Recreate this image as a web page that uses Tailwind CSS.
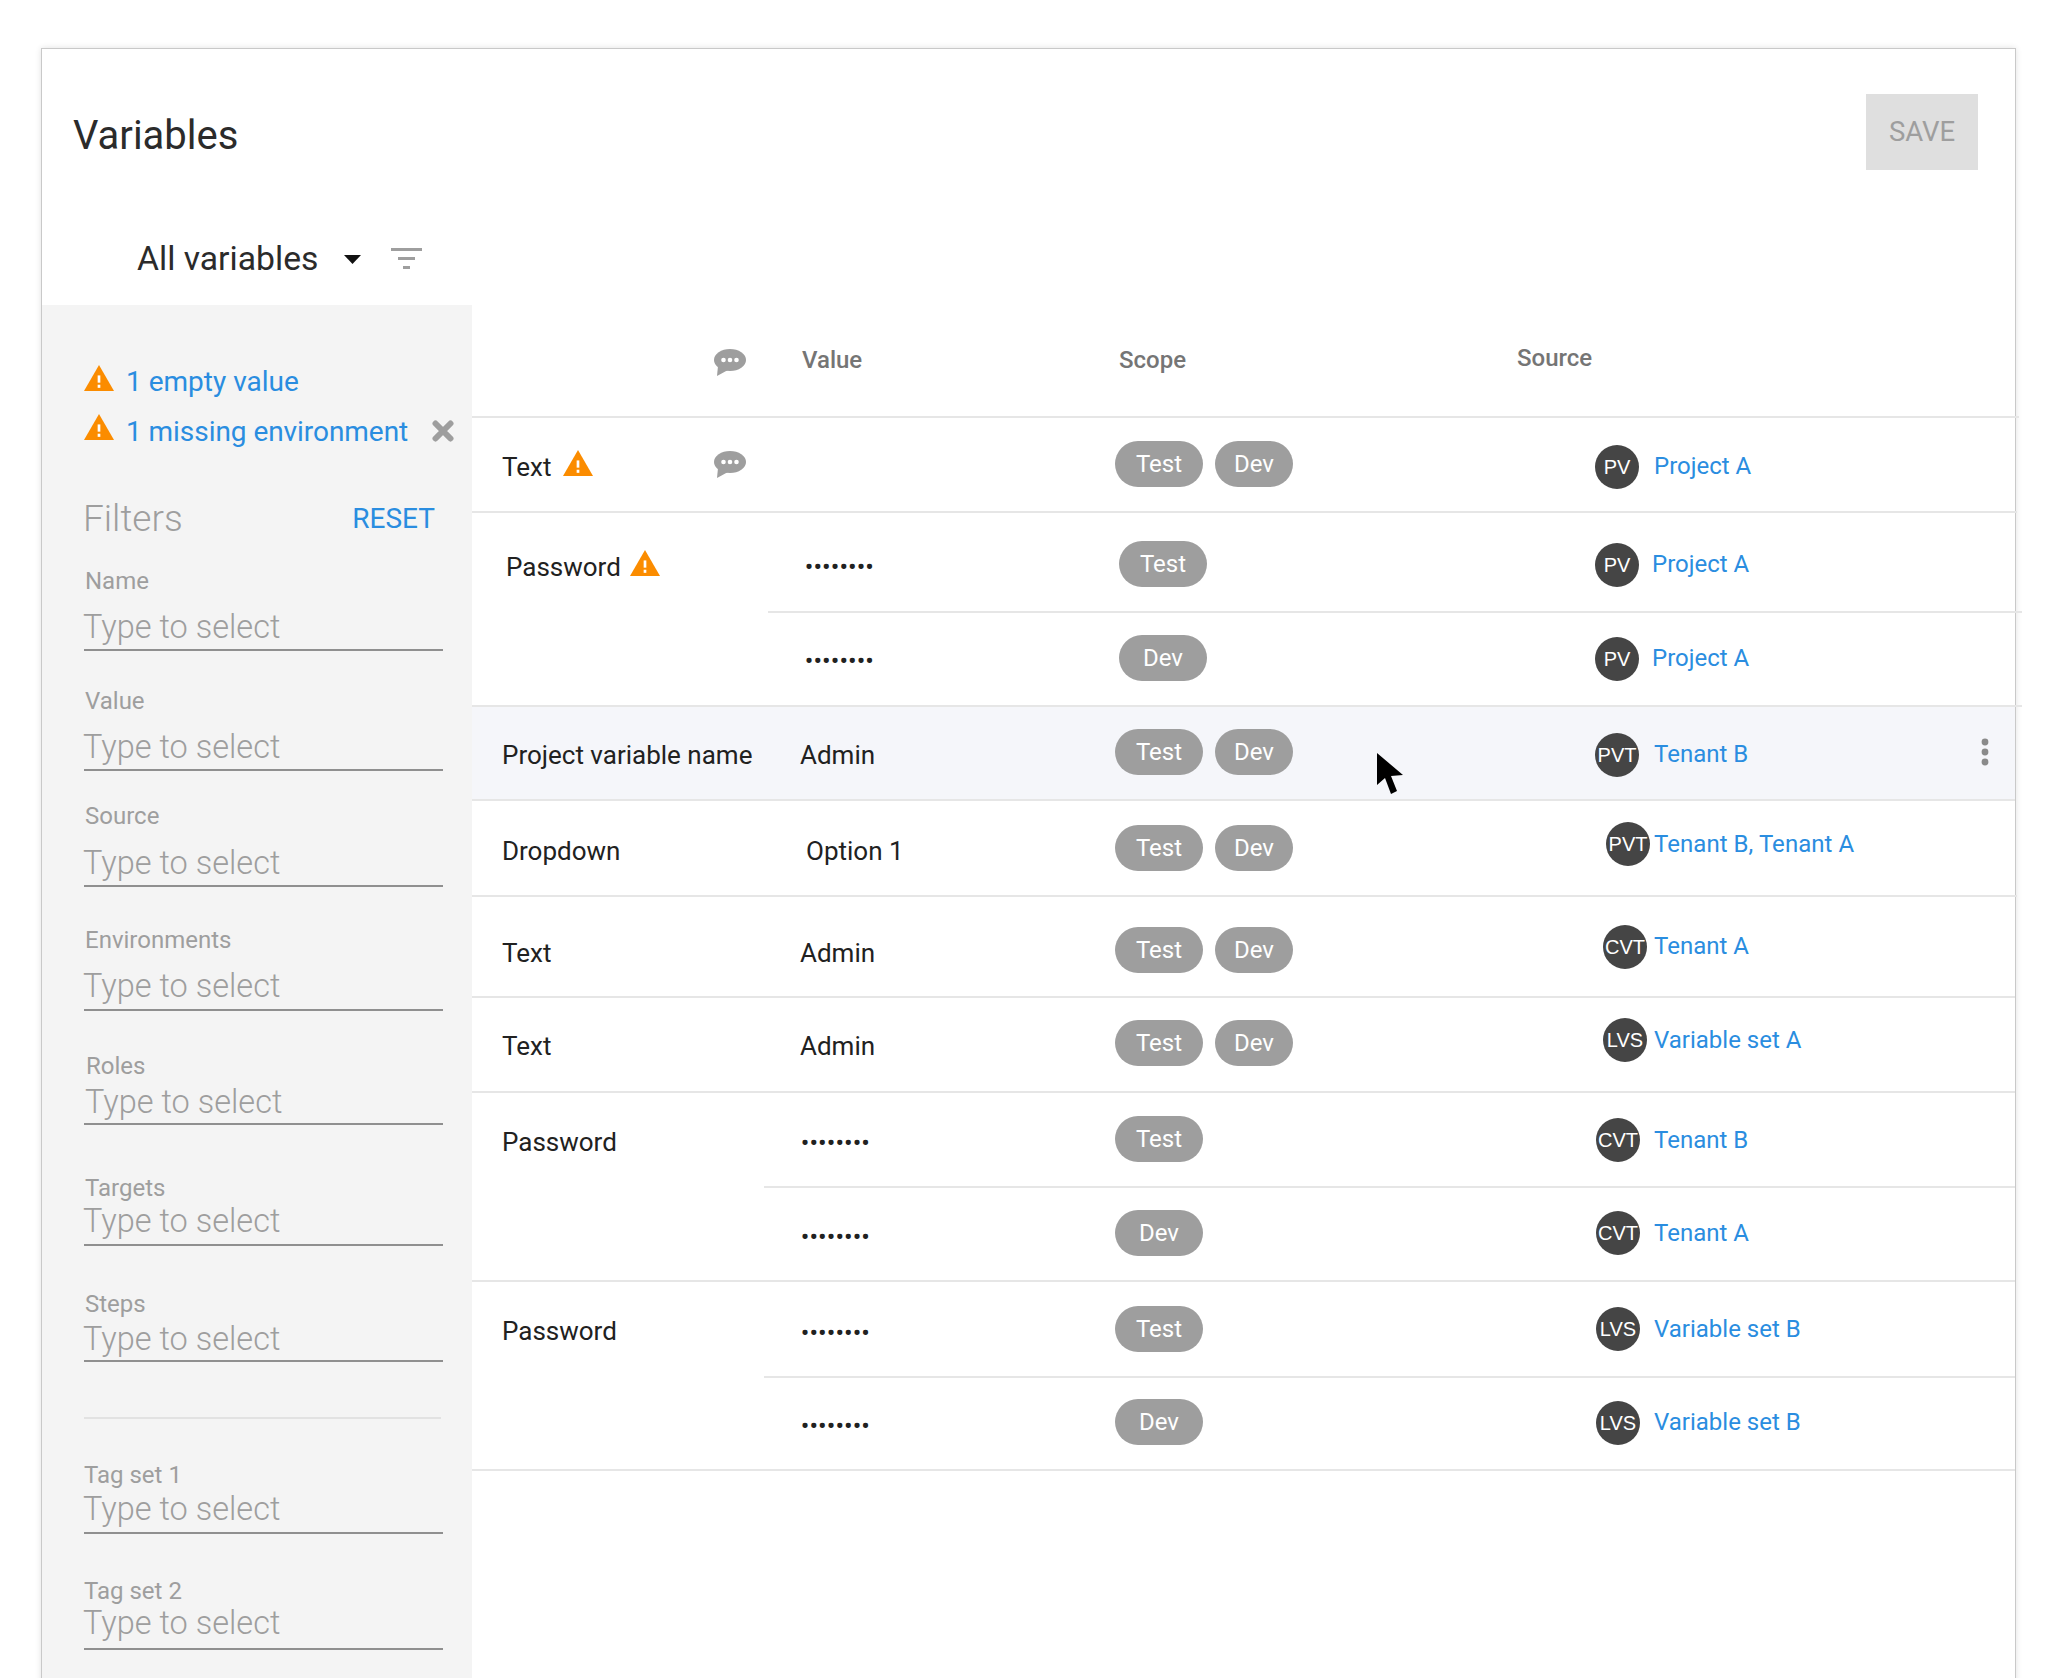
<!DOCTYPE html>
<html><head><meta charset="utf-8"><script src="https://cdn.jsdelivr.net/npm/@tailwindcss/browser@4"></script></head>
<body class="bg-white font-['Roboto',sans-serif] text-[#212121] overflow-hidden">
<div class="relative w-[2062px] h-[1678px] overflow-hidden pt-[48px] pl-[41px]">
<div class="w-[1975px] h-[1700px] bg-white border border-[#c9c9c9] shadow-[0_0_6px_rgba(0,0,0,0.12)] flex flex-col">
  <div class="h-[256px] shrink-0 relative flex flex-col">
    <div class="flex justify-between items-start pl-[32px] pr-[37px] pt-[45px]">
      <div class="text-[40px] leading-[48px] mt-[18px] text-[#2b2b2b] ml-[-1px]">Variables</div>
      <div class="w-[112px] h-[76px] bg-[#dfdfdf] text-[#9e9e9e] text-[27.5px] flex items-center justify-center">SAVE</div>
    </div>
    <div class="flex items-center pl-[96px] mt-[69px]">
      <span class="text-[33.7px] leading-[40px] text-[#2b2b2b] ml-[-1px]">All variables</span>
      <svg class="ml-[26px]" width="17" height="9" viewBox="0 0 17 9"><path d="M0 0H17L8.5 9Z" fill="#111"/></svg>
      <svg class="ml-[30px] mt-[-2px]" width="31" height="21" viewBox="0 0 31 21" fill="#9e9e9e"><rect width="31" height="3"/><rect x="7" y="9" width="17" height="3"/><rect x="12" y="18" width="7" height="3"/></svg>
    </div>
  </div>
  <div class="flex flex-1 min-h-0">
    <aside class="w-[430px] shrink-0 bg-[#f4f4f4] pl-[42px] pt-[61px] text-[#9e9e9e]">
      <div class="flex items-center h-[30px] text-[#2a8de0] text-[28px]">
        <svg class="mt-[-6px]" width="30" height="26" viewBox="0 0 29 25"><path d="M14.5 0L29 25H0Z" fill="#fb8c00"/><rect x="13.2" y="10" width="2.6" height="7" fill="#fff"/><rect x="13.2" y="19" width="2.6" height="3" fill="#fff"/></svg>
        <span class="ml-[12px] mt-[1px]">1 empty value</span>
      </div>
      <div class="flex items-center h-[30px] mt-[20px] text-[#2a8de0] text-[28px]">
        <svg class="mt-[-8px]" width="30" height="26" viewBox="0 0 29 25"><path d="M14.5 0L29 25H0Z" fill="#fb8c00"/><rect x="13.2" y="10" width="2.6" height="7" fill="#fff"/><rect x="13.2" y="19" width="2.6" height="3" fill="#fff"/></svg>
        <span class="ml-[12px] mt-[1px] w-[306px] whitespace-nowrap tracking-[-0.05px]">1 missing environment</span>
        <svg width="22" height="22" viewBox="0 0 22 22"><path d="M3.5 3.5L18.5 18.5M18.5 3.5L3.5 18.5" stroke="#9e9e9e" stroke-width="6" stroke-linecap="round"/></svg>
      </div>
      <div class="flex justify-between items-center h-[40px] mt-[53px] w-[349px]">
        <span class="text-[37px] font-light text-[#9e9e9e] ml-[-1px]">Filters</span>
        <span class="text-[28px] text-[#2a8de0] mr-[-2px]">RESET</span>
      </div>
      <div class="w-[359px]">
        <div class="mt-[27px] h-[30px] leading-[30px] text-[24px] pl-[1px]">Name</div>
        <div class="mt-[7px] h-[48px] leading-[48px] text-[32.5px] font-light border-b-2 border-[#8f8f8f] pl-0"><span class="ml-[-1px]">Type to select</span></div>
        <div class="mt-[35px] h-[30px] leading-[30px] text-[24px] pl-[1px]">Value</div>
        <div class="mt-[7px] h-[48px] leading-[48px] text-[32.5px] font-light border-b-2 border-[#8f8f8f]"><span class="ml-[-1px]">Type to select</span></div>
        <div class="mt-[30px] h-[30px] leading-[30px] text-[24px] pl-[1px]">Source</div>
        <div class="mt-[8px] h-[48px] leading-[48px] text-[32.5px] font-light border-b-2 border-[#8f8f8f]"><span class="ml-[-1px]">Type to select</span></div>
        <div class="mt-[38px] h-[30px] leading-[30px] text-[24px] pl-[1px]">Environments</div>
        <div class="mt-[8px] h-[48px] leading-[46px] text-[32.5px] font-light border-b-2 border-[#8f8f8f]"><span class="ml-[-1px]">Type to select</span></div>
        <div class="mt-[40px] h-[30px] leading-[30px] text-[24px] pl-[2px]">Roles</div>
        <div class="mt-[-4px] h-[48px] leading-[50px] text-[32.5px] font-light border-b-2 border-[#8f8f8f] pl-[2px]"><span class="ml-[-1px]">Type to select</span></div>
        <div class="mt-[48px] h-[30px] leading-[30px] text-[24px] pl-[1px]">Targets</div>
        <div class="mt-[-5px] h-[48px] leading-[46px] text-[32.5px] font-light border-b-2 border-[#8f8f8f]"><span class="ml-[-1px]">Type to select</span></div>
        <div class="mt-[43px] h-[30px] leading-[30px] text-[24px] pl-[1px]">Steps</div>
        <div class="mt-[-5px] h-[48px] leading-[50px] text-[32.5px] font-light border-b-2 border-[#8f8f8f]"><span class="ml-[-1px]">Type to select</span></div>
        <div class="mt-[55px] h-[2px] bg-[#e2e2e2] w-[357px]"></div>
        <div class="mt-[41px] h-[30px] leading-[30px] text-[24px]">Tag set 1</div>
        <div class="mt-[-4px] h-[48px] leading-[46px] text-[32.5px] font-light border-b-2 border-[#8f8f8f]"><span class="ml-[-1px]">Type to select</span></div>
        <div class="mt-[42px] h-[30px] leading-[30px] text-[24px]">Tag set 2</div>
        <div class="mt-[-4px] h-[48px] leading-[43px] text-[32.5px] font-light border-b-2 border-[#8f8f8f]"><span class="ml-[-1px]">Type to select</span></div>
      </div>
    </aside>
    <main class="flex-1 min-w-0 text-[26px] leading-[30px]">
      <div class="h-[113px] flex border-b-2 border-[#e6e6e6] mr-[-4px] text-[24px] font-medium text-[#757575]">
        <div class="w-[328px] pt-[44px] pl-[241px] shrink-0"><svg width="33" height="27" viewBox="0 0 33 27"><ellipse cx="17" cy="11" rx="16" ry="11" fill="#9e9e9e"/><path d="M5 17L4 27L15 21Z" fill="#9e9e9e"/><circle cx="10.5" cy="11" r="2.3" fill="#fff"/><circle cx="17" cy="11" r="2.3" fill="#fff"/><circle cx="23.5" cy="11" r="2.3" fill="#fff"/></svg></div>
        <div class="w-[319px] pt-[40px] pl-[2px] shrink-0">Value</div>
        <div class="w-[398px] pt-[40px] shrink-0">Scope</div>
        <div class="pt-[38px]">Source</div>
      </div>

      <div class="h-[95px] flex border-b-2 border-[#e6e6e6] mr-[-2px]">
        <div class="w-[328px] pl-[30px] pt-[34px] shrink-0 relative flex items-start"><span>Text</span><svg class="ml-[12px] mt-[-2px]" width="30" height="26" viewBox="0 0 29 25"><path d="M14.5 0L29 25H0Z" fill="#fb8c00"/><rect x="13.2" y="10" width="2.6" height="7" fill="#fff"/><rect x="13.2" y="19" width="2.6" height="3" fill="#fff"/></svg><svg class="absolute left-[241px] top-[33px]" width="33" height="27" viewBox="0 0 33 27"><ellipse cx="17" cy="11" rx="16" ry="11" fill="#9e9e9e"/><path d="M5 17L4 27L15 21Z" fill="#9e9e9e"/><circle cx="10.5" cy="11" r="2.3" fill="#fff"/><circle cx="17" cy="11" r="2.3" fill="#fff"/><circle cx="23.5" cy="11" r="2.3" fill="#fff"/></svg></div>
        <div class="w-[315px] shrink-0"></div>
        <div class="w-[480px] pt-[23px] flex gap-[12px] shrink-0 text-[24px] text-white"><span class="w-[88px] h-[46px] rounded-full bg-[#9e9e9e] flex items-center justify-center">Test</span><span class="w-[78px] h-[46px] rounded-full bg-[#9e9e9e] flex items-center justify-center">Dev</span></div>
        <div class="flex"><div class="w-[59px] pt-[27px]"><span class="w-[44px] h-[44px] rounded-full bg-[#454545] text-white text-[20px] font-['Liberation_Sans',sans-serif] flex items-center justify-center whitespace-nowrap">PV</span></div><div class="pt-[33px] text-[#2a8de0] text-[24px]">Project A</div></div>
      </div>

      <div class="flex border-b-2 border-[#e6e6e6] mr-[-7px]">
        <div class="w-[296px] pl-[34px] pt-[39px] shrink-0 flex items-start"><span>Password</span><svg class="ml-[9px] mt-[-2px]" width="30" height="26" viewBox="0 0 29 25"><path d="M14.5 0L29 25H0Z" fill="#fb8c00"/><rect x="13.2" y="10" width="2.6" height="7" fill="#fff"/><rect x="13.2" y="19" width="2.6" height="3" fill="#fff"/></svg></div>
        <div class="flex-1">
          <div class="h-[100px] flex border-b-2 border-[#e6e6e6]">
            <div class="w-[351px] pl-[37px] pt-[39px] shrink-0 text-[22px] tracking-[0.75px] font-bold">••••••••</div>
            <div class="w-[476px] pt-[28px] shrink-0 text-[24px] text-white"><span class="w-[88px] h-[46px] rounded-full bg-[#9e9e9e] flex items-center justify-center">Test</span></div>
            <div class="flex"><div class="w-[57px] pt-[30px]"><span class="w-[44px] h-[44px] rounded-full bg-[#454545] text-white text-[20px] font-['Liberation_Sans',sans-serif] flex items-center justify-center whitespace-nowrap">PV</span></div><div class="pt-[36px] text-[#2a8de0] text-[24px]">Project A</div></div>
          </div>
          <div class="h-[92px] flex">
            <div class="w-[351px] pl-[37px] pt-[33px] shrink-0 text-[22px] tracking-[0.75px] font-bold">••••••••</div>
            <div class="w-[476px] pt-[22px] shrink-0 text-[24px] text-white"><span class="w-[88px] h-[46px] rounded-full bg-[#9e9e9e] flex items-center justify-center">Dev</span></div>
            <div class="flex"><div class="w-[57px] pt-[24px]"><span class="w-[44px] h-[44px] rounded-full bg-[#454545] text-white text-[20px] font-['Liberation_Sans',sans-serif] flex items-center justify-center whitespace-nowrap">PV</span></div><div class="pt-[30px] text-[#2a8de0] text-[24px]">Project A</div></div>
          </div>
        </div>
      </div>

      <div class="h-[94px] flex border-b-2 border-[#e6e6e6] bg-[#f5f6fa] relative">
        <div class="w-[328px] pl-[30px] pt-[33px] shrink-0 whitespace-nowrap">Project variable name</div>
        <div class="w-[315px] pt-[33px] shrink-0">Admin</div>
        <div class="w-[480px] pt-[22px] flex gap-[12px] shrink-0 text-[24px] text-white"><span class="w-[88px] h-[46px] rounded-full bg-[#9e9e9e] flex items-center justify-center">Test</span><span class="w-[78px] h-[46px] rounded-full bg-[#9e9e9e] flex items-center justify-center">Dev</span></div>
        <div class="flex"><div class="w-[59px] pt-[26px]"><span class="w-[44px] h-[44px] rounded-full bg-[#454545] text-white text-[20px] font-['Liberation_Sans',sans-serif] flex items-center justify-center whitespace-nowrap">PVT</span></div><div class="pt-[32px] text-[#2a8de0] text-[24px]">Tenant B</div></div>
        <svg class="absolute left-[1509px] top-[31px]" width="8" height="28" viewBox="0 0 8 28" fill="#8a8a8a"><circle cx="4" cy="4" r="3.4"/><circle cx="4" cy="14" r="3.4"/><circle cx="4" cy="24" r="3.4"/></svg>
      </div>

      <div class="h-[96px] flex border-b-2 border-[#e6e6e6] mr-[-2px]">
        <div class="w-[328px] pl-[30px] pt-[35px] shrink-0">Dropdown</div>
        <div class="w-[315px] pl-[6px] pt-[35px] shrink-0">Option 1</div>
        <div class="w-[480px] pt-[24px] flex gap-[12px] shrink-0 text-[24px] text-white"><span class="w-[88px] h-[46px] rounded-full bg-[#9e9e9e] flex items-center justify-center">Test</span><span class="w-[78px] h-[46px] rounded-full bg-[#9e9e9e] flex items-center justify-center">Dev</span></div>
        <div class="flex"><div class="w-[59px] pt-[21px] pl-[11px]"><span class="w-[44px] h-[44px] rounded-full bg-[#454545] text-white text-[20px] font-['Liberation_Sans',sans-serif] flex items-center justify-center whitespace-nowrap">PVT</span></div><div class="pt-[28px] text-[#2a8de0] text-[24px] whitespace-nowrap tracking-[0.05px]">Tenant B, Tenant A</div></div>
      </div>

      <div class="h-[101px] flex border-b-2 border-[#e6e6e6]">
        <div class="w-[328px] pl-[30px] pt-[41px] shrink-0">Text</div>
        <div class="w-[315px] pt-[41px] shrink-0">Admin</div>
        <div class="w-[480px] pt-[30px] flex gap-[12px] shrink-0 text-[24px] text-white"><span class="w-[88px] h-[46px] rounded-full bg-[#9e9e9e] flex items-center justify-center">Test</span><span class="w-[78px] h-[46px] rounded-full bg-[#9e9e9e] flex items-center justify-center">Dev</span></div>
        <div class="flex"><div class="w-[59px] pt-[28px] pl-[8px]"><span class="w-[44px] h-[44px] rounded-full bg-[#454545] text-white text-[20px] font-['Liberation_Sans',sans-serif] flex items-center justify-center whitespace-nowrap">CVT</span></div><div class="pt-[34px] text-[#2a8de0] text-[24px]">Tenant A</div></div>
      </div>

      <div class="h-[95px] flex border-b-2 border-[#e6e6e6]">
        <div class="w-[328px] pl-[30px] pt-[33px] shrink-0">Text</div>
        <div class="w-[315px] pt-[33px] shrink-0">Admin</div>
        <div class="w-[480px] pt-[22px] flex gap-[12px] shrink-0 text-[24px] text-white"><span class="w-[88px] h-[46px] rounded-full bg-[#9e9e9e] flex items-center justify-center">Test</span><span class="w-[78px] h-[46px] rounded-full bg-[#9e9e9e] flex items-center justify-center">Dev</span></div>
        <div class="flex"><div class="w-[59px] pt-[20px] pl-[8px]"><span class="w-[44px] h-[44px] rounded-full bg-[#454545] text-white text-[20px] font-['Liberation_Sans',sans-serif] flex items-center justify-center whitespace-nowrap">LVS</span></div><div class="pt-[27px] text-[#2a8de0] text-[24px] whitespace-nowrap">Variable set A</div></div>
      </div>

      <div class="flex border-b-2 border-[#e6e6e6]">
        <div class="w-[292px] pl-[30px] pt-[34px] shrink-0">Password</div>
        <div class="flex-1">
          <div class="h-[95px] flex border-b-2 border-[#e6e6e6]">
            <div class="w-[351px] pl-[37px] pt-[35px] shrink-0 text-[22px] tracking-[0.75px] font-bold">••••••••</div>
            <div class="w-[480px] pt-[23px] shrink-0 text-[24px] text-white"><span class="w-[88px] h-[46px] rounded-full bg-[#9e9e9e] flex items-center justify-center">Test</span></div>
            <div class="flex"><div class="w-[59px] pt-[25px] pl-[1px]"><span class="w-[44px] h-[44px] rounded-full bg-[#454545] text-white text-[20px] font-['Liberation_Sans',sans-serif] flex items-center justify-center whitespace-nowrap">CVT</span></div><div class="pt-[32px] text-[#2a8de0] text-[24px]">Tenant B</div></div>
          </div>
          <div class="h-[92px] flex">
            <div class="w-[351px] pl-[37px] pt-[34px] shrink-0 text-[22px] tracking-[0.75px] font-bold">••••••••</div>
            <div class="w-[480px] pt-[22px] shrink-0 text-[24px] text-white"><span class="w-[88px] h-[46px] rounded-full bg-[#9e9e9e] flex items-center justify-center">Dev</span></div>
            <div class="flex"><div class="w-[59px] pt-[23px] pl-[1px]"><span class="w-[44px] h-[44px] rounded-full bg-[#454545] text-white text-[20px] font-['Liberation_Sans',sans-serif] flex items-center justify-center whitespace-nowrap">CVT</span></div><div class="pt-[30px] text-[#2a8de0] text-[24px]">Tenant A</div></div>
          </div>
        </div>
      </div>

      <div class="flex border-b-2 border-[#e6e6e6]">
        <div class="w-[292px] pl-[30px] pt-[34px] shrink-0">Password</div>
        <div class="flex-1">
          <div class="h-[96px] flex border-b-2 border-[#e6e6e6]">
            <div class="w-[351px] pl-[37px] pt-[36px] shrink-0 text-[22px] tracking-[0.75px] font-bold">••••••••</div>
            <div class="w-[480px] pt-[24px] shrink-0 text-[24px] text-white"><span class="w-[88px] h-[46px] rounded-full bg-[#9e9e9e] flex items-center justify-center">Test</span></div>
            <div class="flex"><div class="w-[59px] pt-[25px] pl-[1px]"><span class="w-[44px] h-[44px] rounded-full bg-[#454545] text-white text-[20px] font-['Liberation_Sans',sans-serif] flex items-center justify-center whitespace-nowrap">LVS</span></div><div class="pt-[32px] text-[#2a8de0] text-[24px] whitespace-nowrap">Variable set B</div></div>
          </div>
          <div class="h-[91px] flex">
            <div class="w-[351px] pl-[37px] pt-[33px] shrink-0 text-[22px] tracking-[0.75px] font-bold">••••••••</div>
            <div class="w-[480px] pt-[21px] shrink-0 text-[24px] text-white"><span class="w-[88px] h-[46px] rounded-full bg-[#9e9e9e] flex items-center justify-center">Dev</span></div>
            <div class="flex"><div class="w-[59px] pt-[23px] pl-[1px]"><span class="w-[44px] h-[44px] rounded-full bg-[#454545] text-white text-[20px] font-['Liberation_Sans',sans-serif] flex items-center justify-center whitespace-nowrap">LVS</span></div><div class="pt-[29px] text-[#2a8de0] text-[24px] whitespace-nowrap">Variable set B</div></div>
          </div>
        </div>
      </div>
    </main>
  </div>
</div>
<svg class="absolute left-[1377px] top-[753px]" width="26" height="41" viewBox="0 0 26 41"><path d="M0 0V32L8 25L14 41L20 38L14 23L26 22Z" fill="#000"/></svg>
</div>
</body></html>
